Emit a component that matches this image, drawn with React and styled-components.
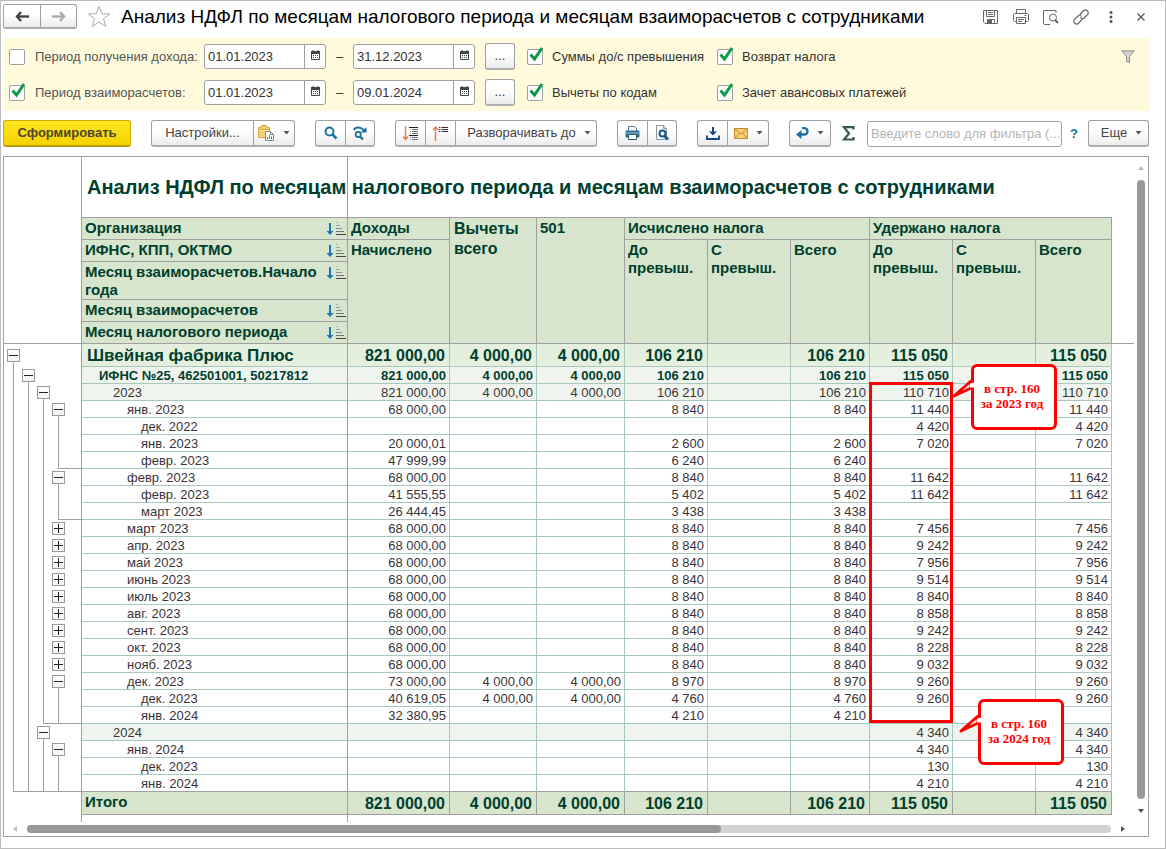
import React from "react";
import styled, { createGlobalStyle, css } from "styled-components";

const GRAY = "#a0a0a0";
const TEAL = "#a9c8bb";
const HEAD = "#d6e5cb";
const INK = "#003f2f";

const GlobalStyle = createGlobalStyle`
  *, *::before, *::after { box-sizing: border-box; }
  body {
    margin: 0;
    background: #fff;
    color: #333;
    font: 13px/16px "Liberation Sans", Arial, sans-serif;
  }
  button, input { font: inherit; color: inherit; }
  svg { display: block; flex: none; }
`;

const Window = styled.div`
  display: flex;
  flex-direction: column;
  min-height: 100vh;
  padding: 0 16px 11px 2px;
  border: 1px solid #bcbcbc;
`;

/* ---------- title bar ---------- */

const TitleBar = styled.header`
  display: flex;
  align-items: center;
  height: 37px;
  padding-bottom: 6px;
`;

const Title = styled.h1`
  flex: 1;
  margin: 0 0 0 10px;
  color: #000;
  font-size: 19px;
  line-height: 24px;
  font-weight: 400;
  white-space: nowrap;
`;

const Group = styled.div`
  display: flex;
  flex: none;
  height: ${(p) => p.$height || 27}px;
  border: 1px solid ${GRAY};
  border-bottom: 2px solid #adadad;
  border-radius: 3px;
  background: linear-gradient(#fff 40%, #ececec);
`;

const GroupButton = styled.button`
  display: flex;
  align-items: center;
  justify-content: center;
  gap: 8px;
  width: ${(p) => p.$width}px;
  padding: 0 0 0 ${(p) => p.$inset || 0}px;
  border: 0;
  background: none;
  color: #444;
  white-space: nowrap;
  & + & { border-left: 1px solid ${GRAY}; }
`;

const Star = styled.button`
  margin-left: 10px;
  padding: 0;
  border: 0;
  background: none;
`;

const TitleTools = styled.div`
  display: flex;
  gap: 14px;
`;

const IconButton = styled.button`
  display: flex;
  align-items: center;
  justify-content: center;
  width: 16px;
  height: 20px;
  padding: 0;
  border: 0;
  background: none;
`;

/* ---------- filter panel ---------- */

const Filters = styled.section`
  display: flex;
  justify-content: space-between;
  padding: 5px 13px 5px 6px;
  background: #fffadb;
`;

const FilterGrid = styled.div`
  display: grid;
  grid-template-columns: 195px 122px 27px 122px 40px 202px auto;
  grid-auto-rows: 27px;
  row-gap: 9px;
  align-items: center;
`;

const CheckLabel = styled.label`
  display: flex;
  align-items: center;
  gap: ${(p) => (p.$soft ? 10 : 9)}px;
  padding-left: ${(p) => p.$indent || 0}px;
  color: ${(p) => (p.$soft ? "#555" : "#333")};
  white-space: nowrap;
`;

const CheckBox = styled.span`
  display: grid;
  flex: none;
  > * { grid-area: 1 / 1; }
  svg { pointer-events: none; overflow: visible; }
`;

const CheckInput = styled.input`
  width: 16px;
  height: 16px;
  margin: 0;
  appearance: none;
  border: 1px solid ${GRAY};
  border-radius: 2px;
  background: #fff;
`;

const DateBox = styled.div`
  display: flex;
  height: 25px;
  border: 1px solid ${GRAY};
  border-radius: 3px;
  background: #fff;
  overflow: hidden;
`;

const DateInput = styled.input`
  flex: 1;
  min-width: 0;
  padding: 0 3px;
  border: 0;
  outline: 0;
  background: none;
`;

const DateButton = styled.button`
  display: flex;
  align-items: center;
  justify-content: center;
  width: 21px;
  padding: 0 0 3px;
  border: 0;
  border-left: 1px solid ${GRAY};
  background: none;
`;

const Dash = styled.span`
  text-align: center;
`;

const DotsButton = styled.button`
  justify-self: end;
  width: 30px;
  height: 27px;
  padding: 0;
  border: 1px solid ${GRAY};
  border-bottom: 2px solid #adadad;
  border-radius: 3px;
  background: linear-gradient(#fff 40%, #ececec);
`;

const FilterToggle = styled(IconButton)`
  margin-top: 3px;
`;

/* ---------- command bar ---------- */

const CommandBar = styled.div`
  display: flex;
  align-items: center;
  gap: 20px;
  padding: 9px 0;
`;

const RunButton = styled.button`
  width: 128px;
  height: 27px;
  padding: 0;
  border: 1px solid #c9a800;
  border-bottom: 2px solid #b79b14;
  border-radius: 3px;
  background: linear-gradient(#ffe61f, #f6d200);
  color: #4b4531;
  font-weight: 700;
`;

const SearchZone = styled.div`
  display: flex;
  flex: 1;
  align-items: center;
  gap: 8px;
  margin: 0 -10px 0 -9px;
`;

const SearchInput = styled.input`
  flex: 1;
  min-width: 0;
  height: 26px;
  padding: 0 0 0 3px;
  border: 1px solid ${GRAY};
  border-radius: 3px;
  outline: 0;
  &::placeholder { color: #b4b4b4; opacity: 1; }
`;

const HelpButton = styled.button`
  padding: 0;
  border: 0;
  background: none;
  color: #1b75a8;
  font-weight: 700;
`;

/* ---------- spreadsheet ---------- */

const Sheet = styled.main`
  display: flex;
  flex: 1;
  flex-direction: column;
  border: 1px solid ${GRAY};
`;

const SheetBody = styled.div`
  display: flex;
`;

const Canvas = styled.div`
  position: relative;
  flex: 1;
  min-width: 0;
  overflow: hidden;
`;

const Table = styled.table`
  width: 100%;
  table-layout: fixed;
  border-collapse: separate;
  border-spacing: 0;
  color: #3a3437;
  font-size: 13px;
  line-height: 14px;
  td, th { padding: 0; }
`;

const Gutter = styled.td`
  vertical-align: top;
  border-right: 1px solid ${GRAY};
  border-bottom: ${(p) => (p.$line ? `1px solid ${GRAY}` : 0)};
`;

const ReportTitle = styled.td`
  height: 61px;
  && { padding-left: 5px; }
  border-right: 1px solid ${GRAY};
  border-bottom: 1px solid ${GRAY};
  color: ${INK};
  font-size: 20px;
  font-weight: 700;
  line-height: 24px;
  white-space: nowrap;
`;

const TopRule = styled.td`
  border-bottom: 1px solid ${GRAY};
`;

const HeadCell = styled.th`
  height: ${(p) => p.$height || 22}px;
  && { padding: ${(p) => (p.$large ? "1px 4px 0" : "1px 3px 0")}; }
  vertical-align: top;
  border-right: 1px solid ${GRAY};
  border-bottom: 1px solid ${GRAY};
  background: ${HEAD};
  color: ${INK};
  font-size: ${(p) => (p.$large ? 16 : 15)}px;
  font-weight: 700;
  line-height: ${(p) => (p.$large ? 20 : 18)}px;
  text-align: left;
`;

const SortHead = styled.div`
  display: flex;
  justify-content: space-between;
  margin-right: -2px;
  svg { margin-top: 3px; }
`;

const rowLook = {
  org: css`
    height: 23px;
    background: #e4f0dd;
    color: ${INK};
    font-size: 16px;
    font-weight: 700;
  `,
  inspect: css`
    background: #eff4ee;
    color: ${INK};
    font-weight: 700;
  `,
  year: css`
    background: #eff4ee;
  `,
  total: css`
    height: 23px;
    border-color: ${GRAY};
    background: ${HEAD};
    color: ${INK};
    font-size: 16px;
    font-weight: 700;
  `,
};

const Cell = styled.td`
  height: 17px;
  border-right: 1px solid ${TEAL};
  border-bottom: 1px solid ${(p) => (p.$last ? GRAY : TEAL)};
  text-align: right;
  white-space: nowrap;
  && {
    padding-top: 2px;
    padding-right: ${(p) => (p.$kind === "org" || p.$kind === "total" ? 4 : 3)}px;
  }
  ${(p) => rowLook[p.$kind]}
`;

const NameCell = styled(Cell)`
  border-right-color: ${GRAY};
  text-align: left;
  ${(p) => p.$kind === "org" && "font-size: 17px;"}
  && { padding-left: ${(p) => p.$indent}px; }
`;

const Stub = styled.td`
  height: 7px;
  border-right: 1px solid ${GRAY};
`;

const Tree = styled.div`
  height: ${(p) => p.$height}px;
`;

const Slots = styled.div`
  display: flex;
  height: 100%;
  padding-left: 2px;
`;

const Slot = styled.div`
  display: flex;
  flex-direction: column;
  align-items: center;
  width: 15px;
  padding-top: ${(p) => p.$top || 0}px;
`;

const Stem = styled.span`
  flex: 1;
  width: 1px;
  background: ${GRAY};
`;

const Branch = styled.div`
  height: 1px;
  margin: -1px 0 0 ${(p) => 9 + p.$level * 15}px;
  background: ${GRAY};
`;

const Toggle = styled.button`
  display: grid;
  place-items: center;
  width: 13px;
  height: 13px;
  padding: 0;
  border: 1px solid #999;
  background: linear-gradient(#fff, #f4f4f4);
`;

const Frame = styled.div`
  position: absolute;
  left: 865px;
  top: 225px;
  width: 84px;
  height: 341px;
  border: 3px solid #f00;
  pointer-events: none;
`;

const Callout = styled.aside`
  position: absolute;
  left: ${(p) => p.$x}px;
  top: ${(p) => p.$y}px;
  display: grid;
  place-items: center;
  width: 86px;
  height: 66px;
  padding: 0 4px 2px 0;
  border: 3px solid #f00;
  border-radius: 6px;
  background: #fff;
  color: #f00;
  font: 700 13px/15px "Liberation Serif", "Times New Roman", serif;
  text-align: center;
  svg { position: absolute; left: -23px; top: 8px; }
`;

const VScroll = styled.div`
  display: flex;
  flex: none;
  flex-direction: column;
  align-items: center;
  gap: 9px;
  width: 14px;
  padding: 8px 0;
`;

const VThumb = styled.div`
  flex: 1;
  width: 8px;
  border-radius: 4px;
  background: #999;
`;

const HScroll = styled.div`
  display: flex;
  align-items: center;
  gap: 9px;
  height: 14px;
  padding: 0 22px 0 8px;
`;

const HTrack = styled.div`
  flex: 1;
  height: 8px;
  border-radius: 4px;
  background: #d2d2d2;
`;

const HThumb = styled.div`
  width: 64%;
  height: 8px;
  border-radius: 4px;
  background: #999;
`;

/* ---------- drawings ---------- */

const Caret = () => (
  <svg width="7" height="4" viewBox="0 0 7 4"><path d="M0.5 0h6L3.5 3.5z" fill="#555" /></svg>
);

const NavArrow = ({ color, flip }) => (
  <svg width="15" height="11" viewBox="0 0 15 11">
    <g transform={flip ? "translate(15 0) scale(-1 1)" : undefined}>
      <path d="M14 5.500H3" fill="none" stroke={color} strokeWidth="2.400" />
      <path d="M6 1L2 5.500 6 10" fill="none" stroke={color} strokeWidth="2.400" />
    </g>
  </svg>
);

const StarIcon = () => (
  <svg width="24" height="23" viewBox="0 0 24 23">
    <path d="M12 1.500l2.800 7.200 8 .3-6.300 4.700 2.300 7.800L12 17l-6.800 4.500 2.300-7.800L1.200 9l8-.3z" fill="#fff" stroke="#aaa" />
  </svg>
);

const SaveIcon = () => (
  <svg width="16" height="16" viewBox="0 0 16 16" fill="none" stroke="#666">
    <path d="M.5 1.500h14v13H2L.5 13z" />
    <path d="M3.500 1.500v6h8v-6M5 3.500h5M5 5.500h5M4.500 14.500v-4h7v4" />
    <path d="M5 11h4v3H5z" fill="#666" stroke="none" />
  </svg>
);

const PrinterIcon = () => (
  <svg width="16" height="16" viewBox="0 0 16 16" fill="none" stroke="#666">
    <path d="M3.500 4.500v-4h9v4M3.500 12.500h-2l-1-1v-6l1-1h13l1 1v6l-1 1h-2" />
    <path d="M3.500 8.500h9v6h-9zM5 10.500h6M5 12.500h4M11.500 6.500h2" />
  </svg>
);

const PreviewIcon = () => (
  <svg width="16" height="16" viewBox="0 0 16 16" fill="none" stroke="#666">
    <path d="M7 15.500H1.500L.5 14.500v-13h12.500V4" />
    <circle cx="10" cy="8.500" r="3.500" />
    <path d="M12 11l3 3" strokeWidth="2" />
  </svg>
);

const LinkIcon = () => (
  <svg width="16" height="16" viewBox="0 0 16 16" fill="none" stroke="#666" strokeWidth="1.200" strokeLinecap="round">
    <path d="M7 5.500l3.500-3.700q2-1.700 3.800 0t.2 3.900l-3 3q-1.800 1.500-3.700.2" />
    <path d="M9 10.500l-3.500 3.700q-2 1.700-3.800 0t-.2-3.900l3-3q1.800-1.500 3.700-.2" />
  </svg>
);

const MoreIcon = () => (
  <svg width="4" height="12" viewBox="0 0 4 12" fill="#555">
    <circle cx="2" cy="1.500" r="1.500" /><circle cx="2" cy="6" r="1.500" /><circle cx="2" cy="10.500" r="1.500" />
  </svg>
);

const CloseIcon = () => (
  <svg width="8" height="8" viewBox="0 0 8 8"><path d="M.5.5l7 7M7.500.5l-7 7" stroke="#555" strokeWidth="1.200" /></svg>
);

const FunnelIcon = () => (
  <svg width="14" height="13" viewBox="0 0 14 13">
    <path d="M.8.8h12.400L8.500 6.500v6l-3-.8V6.500z" fill="#d2d2d2" stroke="#8c8c8c" />
  </svg>
);

const CheckMark = () => (
  <svg width="16" height="16" viewBox="0 0 16 16">
    <path d="M3.500 5.500l4 4.500 7.500-11" fill="none" stroke="#0a9a4a" strokeWidth="3" />
  </svg>
);

const CalendarIcon = () => (
  <svg width="9" height="10" viewBox="0 0 9 10">
    <path d="M.5 1.500h8v8h-8z" fill="#fff" stroke="#444" />
    <path d="M0 1h9v3H0zM1.500 0h1v2h-1zM6.500 0h1v2h-1z" fill="#444" />
    <path d="M2 5.500h5M2 7.500h5" stroke="#444" strokeDasharray="1 1" />
  </svg>
);

const FolderReportIcon = () => (
  <svg width="17" height="17" viewBox="0 0 17 17">
    <path d="M2.500 2.500L3.500.5h5l1 2h2v10H.5v-10z" fill="#f5cf72" stroke="#d9a942" />
    <path d="M1 4.500h10" stroke="#d9a942" /><path d="M1 5.500h10" stroke="#fbe6ac" />
    <path d="M7.500 6.500h5l3 3v6h-8z" fill="#fff" stroke="#8a8a8a" />
    <path d="M12.500 6.500v3h3" fill="none" stroke="#8a8a8a" />
    <path d="M9.500 14v-2M13.500 14v-2.500" stroke="#c43a3a" />
    <path d="M11.500 14v-4" stroke="#3b9a55" />
  </svg>
);

const SearchIcon = () => (
  <svg width="14" height="14" viewBox="0 0 14 14" fill="none" stroke="#1b6fa3">
    <circle cx="5.500" cy="5.500" r="4" strokeWidth="1.900" /><path d="M8.300 8.300l4.200 4.200" strokeWidth="2.600" />
  </svg>
);

const SearchNextIcon = () => (
  <svg width="14" height="15" viewBox="0 0 14 15" fill="none" stroke="#1b6fa3">
    <path d="M.8 4Q2 1.500 5 1.500T11 4" strokeWidth="1.800" />
    <path d="M13.500 1v5.500H7.500z" fill="#1b6fa3" stroke="none" />
    <circle cx="5.200" cy="8.500" r="2.600" strokeWidth="1.700" /><path d="M7 10.500l3 3" strokeWidth="2.200" />
  </svg>
);

const ExpandIcon = () => (
  <svg width="16" height="15" viewBox="0 0 16 15" fill="none">
    <path d="M2.500 0v13M0 10.500l2.500 3 2.500-3" stroke="#ee7a45" strokeWidth="1.400" />
    <path d="M6 1.500h9M6 9.500h9" stroke="#222" />
    <path d="M9 3.500h6M9 5.500h6M9 7.500h6M9 11.500h6M9 13.500h6" stroke="#777" />
    <path d="M7 3.500h1M7 5.500h1M7 7.500h1M7 11.500h1M7 13.500h1" stroke="#999" />
  </svg>
);

const CollapseIcon = () => (
  <svg width="16" height="15" viewBox="0 0 16 15" fill="none">
    <path d="M2.500 15V1M0 4l2.500-3L5 4" stroke="#ee7a45" strokeWidth="1.400" />
    <path d="M6 1.500h1.500M8.500 1.500H15M6 3.500h1.500M8.500 3.500H15M6 5.500h1.500M8.500 5.500H15" stroke="#3b2a35" />
  </svg>
);

const PrintColorIcon = () => (
  <svg width="15" height="14" viewBox="0 0 15 14">
    <path d="M3.500 5V.5h6l2 2V5" fill="#fff" stroke="#55748e" />
    <path d="M1.500 4.500h12q1 0 1 1v5q0 1-1 1h-12q-1 0-1-1v-5q0-1 1-1z" fill="#2f6d98" />
    <path d="M3.500 8.500h8v5h-8z" fill="#fff" stroke="#33546d" />
    <path d="M1 7h13" stroke="#9fc3da" />
  </svg>
);

const PreviewColorIcon = () => (
  <svg width="16" height="16" viewBox="0 0 16 16" fill="none">
    <path d="M2.500.5h7l3 3v11h-10z" fill="#fff" stroke="#8797a5" /><path d="M9.500.5v3h3" stroke="#8797a5" />
    <circle cx="8.500" cy="8.500" r="3" fill="#fff" stroke="#14598a" strokeWidth="2" /><path d="M10.500 11l3.500 3.500" stroke="#14598a" strokeWidth="2.800" />
  </svg>
);

const DownloadIcon = () => (
  <svg width="14" height="13" viewBox="0 0 14 13">
    <path d="M6 0h2v4.500h3L7 8.500l-4-4h3z" fill="#14468a" /><path d="M1 8.500V12h12V8.500" fill="none" stroke="#14468a" strokeWidth="1.800" />
  </svg>
);

const MailIcon = () => (
  <svg width="14" height="11" viewBox="0 0 14 11">
    <path d="M.5.5h13v10H.5z" fill="#f7cd7c" stroke="#c98c2a" /><path d="M1 1l6 5 6-5M1 10l4.500-5M13 10L8.500 5" fill="none" stroke="#c98c2a" />
  </svg>
);

const ReturnIcon = () => (
  <svg width="13" height="12" viewBox="0 0 13 12">
    <path d="M6 1.200h2.500Q11.500 1.500 11.500 4.500T8 7.500H4" fill="none" stroke="#1b6fa3" strokeWidth="2.300" />
    <path d="M0 7.500L5.500 3v9z" fill="#1b6fa3" />
  </svg>
);

const SigmaIcon = () => (
  <svg width="17" height="15" viewBox="0 0 17 15">
    <path d="M11.500 3.500V1.200H2L7 7.500 2 13.500h9.500V11" fill="none" stroke="#38565b" strokeWidth="2.200" />
  </svg>
);

const SortIcon = () => (
  <svg width="20" height="14" viewBox="0 0 20 14">
    <path d="M3 1h2v8h2.500L4 13 .5 9H3z" fill="#1d74b8" />
    <path d="M10 .5h2" stroke="#b4b4b4" /><path d="M10 3.500h4" stroke="#a0a0a0" />
    <path d="M10 6.500h6" stroke="#8c8c8c" /><path d="M10 9.500h8" stroke="#747474" /><path d="M10 12.500h10" stroke="#4a4048" />
  </svg>
);

const ScrollArrow = ({ turn, color }) => (
  <svg width="6" height="6" viewBox="0 0 6 6">
    <path d="M0 5l3-4 3 4z" fill={color} transform={`rotate(${turn} 3 3)`} />
  </svg>
);

const CalloutTail = () => (
  <svg width="24" height="24" viewBox="0 0 24 24">
    <path d="M20 6L3 21l17-8z" fill="#fff" stroke="#f00" strokeWidth="3" strokeLinejoin="round" />
    <path d="M19 8.500v4h5v-5z" fill="#fff" />
  </svg>
);

const ToggleSign = ({ plus }) => (
  <svg width="9" height="9" viewBox="0 0 9 9">
    <path d={plus ? "M0 4.500h9M4.500 0v9" : "M0 4.500h9"} stroke="#222" />
  </svg>
);

/* ---------- data ---------- */

/* tree: one letter for each level; "-" open node, "+" closed node, "|" stem, "." blank */
const rows = [
  ["org", "-...", 0, "Швейная фабрика Плюс", ["821 000,00", "4 000,00", "4 000,00", "106 210", "", "106 210", "115 050", "", "115 050"]],
  ["inspect", "|-..", 1, "ИФНС №25, 462501001, 50217812", ["821 000,00", "4 000,00", "4 000,00", "106 210", "", "106 210", "115 050", "", "115 050"]],
  ["year", "||-.", 2, "2023", ["821 000,00", "4 000,00", "4 000,00", "106 210", "", "106 210", "110 710", "", "110 710"]],
  ["month", "|||-", 3, "янв. 2023", ["68 000,00", "", "", "8 840", "", "8 840", "11 440", "", "11 440"]],
  ["month", "||||", 4, "дек. 2022", ["", "", "", "", "", "", "4 420", "", "4 420"]],
  ["month", "||||", 4, "янв. 2023", ["20 000,01", "", "", "2 600", "", "2 600", "7 020", "", "7 020"]],
  ["month", "||||", 4, "февр. 2023", ["47 999,99", "", "", "6 240", "", "6 240", "", "", ""], 3],
  ["month", "|||-", 3, "февр. 2023", ["68 000,00", "", "", "8 840", "", "8 840", "11 642", "", "11 642"]],
  ["month", "||||", 4, "февр. 2023", ["41 555,55", "", "", "5 402", "", "5 402", "11 642", "", "11 642"]],
  ["month", "||||", 4, "март 2023", ["26 444,45", "", "", "3 438", "", "3 438", "", "", ""], 3],
  ["month", "|||+", 3, "март 2023", ["68 000,00", "", "", "8 840", "", "8 840", "7 456", "", "7 456"]],
  ["month", "|||+", 3, "апр. 2023", ["68 000,00", "", "", "8 840", "", "8 840", "9 242", "", "9 242"]],
  ["month", "|||+", 3, "май 2023", ["68 000,00", "", "", "8 840", "", "8 840", "7 956", "", "7 956"]],
  ["month", "|||+", 3, "июнь 2023", ["68 000,00", "", "", "8 840", "", "8 840", "9 514", "", "9 514"]],
  ["month", "|||+", 3, "июль 2023", ["68 000,00", "", "", "8 840", "", "8 840", "8 840", "", "8 840"]],
  ["month", "|||+", 3, "авг. 2023", ["68 000,00", "", "", "8 840", "", "8 840", "8 858", "", "8 858"]],
  ["month", "|||+", 3, "сент. 2023", ["68 000,00", "", "", "8 840", "", "8 840", "9 242", "", "9 242"]],
  ["month", "|||+", 3, "окт. 2023", ["68 000,00", "", "", "8 840", "", "8 840", "8 228", "", "8 228"]],
  ["month", "|||+", 3, "нояб. 2023", ["68 000,00", "", "", "8 840", "", "8 840", "9 032", "", "9 032"]],
  ["month", "|||-", 3, "дек. 2023", ["73 000,00", "4 000,00", "4 000,00", "8 970", "", "8 970", "9 260", "", "9 260"]],
  ["month", "||||", 4, "дек. 2023", ["40 619,05", "4 000,00", "4 000,00", "4 760", "", "4 760", "9 260", "", "9 260"]],
  ["month", "||||", 4, "янв. 2024", ["32 380,95", "", "", "4 210", "", "4 210", "", "", ""], 2],
  ["year", "||-.", 2, "2024", ["", "", "", "", "", "", "4 340", "", "4 340"]],
  ["month", "|||-", 3, "янв. 2024", ["", "", "", "", "", "", "4 340", "", "4 340"]],
  ["month", "||||", 4, "дек. 2023", ["", "", "", "", "", "", "130", "", "130"]],
  ["month", "||||", 4, "янв. 2024", ["", "", "", "", "", "", "4 210", "", "4 210"], 0],
];

const totals = ["821 000,00", "4 000,00", "4 000,00", "106 210", "", "106 210", "115 050", "", "115 050"];
const columnWidths = [78, 266, 102, 87, 88, 83, 83, 79, 83, 83, 76];
const indents = [5, 17, 31, 45, 59];

/* ---------- parts ---------- */

const Check = ({ label, checked, indent, soft }) => (
  <CheckLabel $indent={indent} $soft={soft}>
    <CheckBox>
      <CheckInput type="checkbox" defaultChecked={checked} />
      {checked && <CheckMark />}
    </CheckBox>
    {label}
  </CheckLabel>
);

const DateField = ({ value, label }) => (
  <DateBox>
    <DateInput defaultValue={value} aria-label={label} />
    <DateButton aria-label="Календарь"><CalendarIcon /></DateButton>
  </DateBox>
);

const PeriodRow = ({ label, checked, from, to, first, second }) => (
  <>
    <Check label={label} checked={checked} soft />
    <DateField value={from} label={`${label} с`} />
    <Dash>–</Dash>
    <DateField value={to} label={`${label} по`} />
    <DotsButton aria-label="Выбрать период">...</DotsButton>
    <Check label={first} checked indent={12} />
    <Check label={second} checked />
  </>
);

const TreeNode = ({ tree, end, tall }) => (
  <Tree $height={tall ? 23 : 17}>
    <Slots>
      {tree.split("").map((mark, i) => {
        if (mark === "|") return <Slot key={i}><Stem /></Slot>;
        if (mark === ".") return <Slot key={i} />;
        return (
          <Slot key={i} $top={tall ? 5 : 2}>
            <Toggle aria-label={mark === "+" ? "Развернуть" : "Свернуть"}><ToggleSign plus={mark === "+"} /></Toggle>
            {mark === "-" && <Stem />}
          </Slot>
        );
      })}
    </Slots>
    {end !== undefined && <Branch $level={end} />}
  </Tree>
);

const SortCell = ({ children, height }) => (
  <HeadCell $height={height} scope="col">
    <SortHead><span>{children}</span><SortIcon /></SortHead>
  </HeadCell>
);

const SubHeads = () => (
  <>
    <HeadCell rowSpan={4}>До превыш.</HeadCell>
    <HeadCell rowSpan={4}>С превыш.</HeadCell>
    <HeadCell rowSpan={4}>Всего</HeadCell>
  </>
);

const Report = () => (
  <Table>
    <colgroup>
      {columnWidths.map((w, i) => <col key={i} width={w} />)}
      <col />
    </colgroup>
    <thead>
      <tr>
        <Gutter rowSpan={6} $line />
        <ReportTitle>Анализ НДФЛ по месяцам налогового периода и месяцам взаиморасчетов с сотрудниками</ReportTitle>
        <TopRule colSpan={9} />
        <td />
      </tr>
      <tr>
        <SortCell>Организация</SortCell>
        <HeadCell>Доходы</HeadCell>
        <HeadCell rowSpan={5} $large>Вычеты всего</HeadCell>
        <HeadCell rowSpan={5}>501</HeadCell>
        <HeadCell colSpan={3}>Исчислено налога</HeadCell>
        <HeadCell colSpan={3}>Удержано налога</HeadCell>
        <TopRule rowSpan={5} />
      </tr>
      <tr>
        <SortCell>ИФНС, КПП, ОКТМО</SortCell>
        <HeadCell rowSpan={4}>Начислено</HeadCell>
        <SubHeads />
        <SubHeads />
      </tr>
      <tr><SortCell height={38}>Месяц взаиморасчетов.Начало года</SortCell></tr>
      <tr><SortCell>Месяц взаиморасчетов</SortCell></tr>
      <tr><SortCell>Месяц налогового периода</SortCell></tr>
    </thead>
    <tbody>
      {rows.map(([kind, tree, level, name, values, end], r) => {
        const last = r === rows.length - 1;
        return (
          <tr key={r}>
            <Gutter><TreeNode tree={tree} end={end} tall={kind === "org"} /></Gutter>
            <NameCell $kind={kind} $indent={indents[level]} $last={last}>{name}</NameCell>
            {values.map((v, i) => <Cell key={i} $kind={kind} $last={last}>{v}</Cell>)}
            <td />
          </tr>
        );
      })}
    </tbody>
    <tfoot>
      <tr>
        <Gutter />
        <HeadCell scope="row">Итого</HeadCell>
        {totals.map((v, i) => <Cell key={i} $kind="total">{v}</Cell>)}
        <td />
      </tr>
      <tr><Stub /><Stub /><td colSpan={10} /></tr>
    </tfoot>
  </Table>
);

export default function App() {
  return (
    <>
      <GlobalStyle />
      <Window>
        <TitleBar>
          <Group $height={25}>
            <GroupButton $width={36} aria-label="Назад"><NavArrow color="#444" /></GroupButton>
            <GroupButton $width={36} aria-label="Вперед"><NavArrow color="#aaa" flip /></GroupButton>
          </Group>
          <Star aria-label="В избранное"><StarIcon /></Star>
          <Title>Анализ НДФЛ по месяцам налогового периода и месяцам взаиморасчетов с сотрудниками</Title>
          <TitleTools>
            <IconButton aria-label="Сохранить"><SaveIcon /></IconButton>
            <IconButton aria-label="Печать"><PrinterIcon /></IconButton>
            <IconButton aria-label="Просмотр"><PreviewIcon /></IconButton>
            <IconButton aria-label="Ссылка"><LinkIcon /></IconButton>
            <IconButton aria-label="Еще"><MoreIcon /></IconButton>
            <IconButton aria-label="Закрыть"><CloseIcon /></IconButton>
          </TitleTools>
        </TitleBar>

        <Filters>
          <FilterGrid>
            <PeriodRow label="Период получения дохода:" from="01.01.2023" to="31.12.2023" first="Суммы до/с превышения" second="Возврат налога" />
            <PeriodRow label="Период взаиморасчетов:" checked from="01.01.2023" to="09.01.2024" first="Вычеты по кодам" second="Зачет авансовых платежей" />
          </FilterGrid>
          <FilterToggle aria-label="Отбор"><FunnelIcon /></FilterToggle>
        </Filters>

        <CommandBar>
          <RunButton>Сформировать</RunButton>
          <Group>
            <GroupButton $width={101}>Настройки...</GroupButton>
            <GroupButton $width={41} aria-label="Варианты отчета"><FolderReportIcon /><Caret /></GroupButton>
          </Group>
          <Group>
            <GroupButton $width={29} aria-label="Найти"><SearchIcon /></GroupButton>
            <GroupButton $width={29} aria-label="Найти далее"><SearchNextIcon /></GroupButton>
          </Group>
          <Group>
            <GroupButton $width={29} aria-label="Развернуть группы"><ExpandIcon /></GroupButton>
            <GroupButton $width={30} aria-label="Свернуть группы"><CollapseIcon /></GroupButton>
            <GroupButton $width={141} $inset={6}>Разворачивать до<Caret /></GroupButton>
          </Group>
          <Group>
            <GroupButton $width={29} aria-label="Печать"><PrintColorIcon /></GroupButton>
            <GroupButton $width={29} aria-label="Предпросмотр"><PreviewColorIcon /></GroupButton>
          </Group>
          <Group>
            <GroupButton $width={29} aria-label="Сохранить в файл"><DownloadIcon /></GroupButton>
            <GroupButton $width={41} aria-label="Отправить"><MailIcon /><Caret /></GroupButton>
          </Group>
          <Group>
            <GroupButton $width={40} aria-label="Перейти"><ReturnIcon /><Caret /></GroupButton>
          </Group>
          <SearchZone>
            <SigmaIcon />
            <SearchInput placeholder="Введите слово для фильтра (..." aria-label="Фильтр" />
            <HelpButton aria-label="Справка">?</HelpButton>
          </SearchZone>
          <Group>
            <GroupButton $width={59} $inset={6}>Еще<Caret /></GroupButton>
          </Group>
        </CommandBar>

        <Sheet>
          <SheetBody>
            <Canvas>
              <Report />
              <Frame />
              <Callout $x={967} $y={207}><CalloutTail /><span>в стр. 160<br />за 2023 год</span></Callout>
              <Callout $x={974} $y={542}><CalloutTail /><span>в стр. 160<br />за 2024 год</span></Callout>
            </Canvas>
            <VScroll>
              <ScrollArrow turn={0} color="#bbb" />
              <VThumb />
              <ScrollArrow turn={180} color="#555" />
            </VScroll>
          </SheetBody>
          <HScroll>
            <ScrollArrow turn={-90} color="#bbb" />
            <HTrack><HThumb /></HTrack>
            <ScrollArrow turn={90} color="#555" />
          </HScroll>
        </Sheet>
      </Window>
    </>
  );
}
